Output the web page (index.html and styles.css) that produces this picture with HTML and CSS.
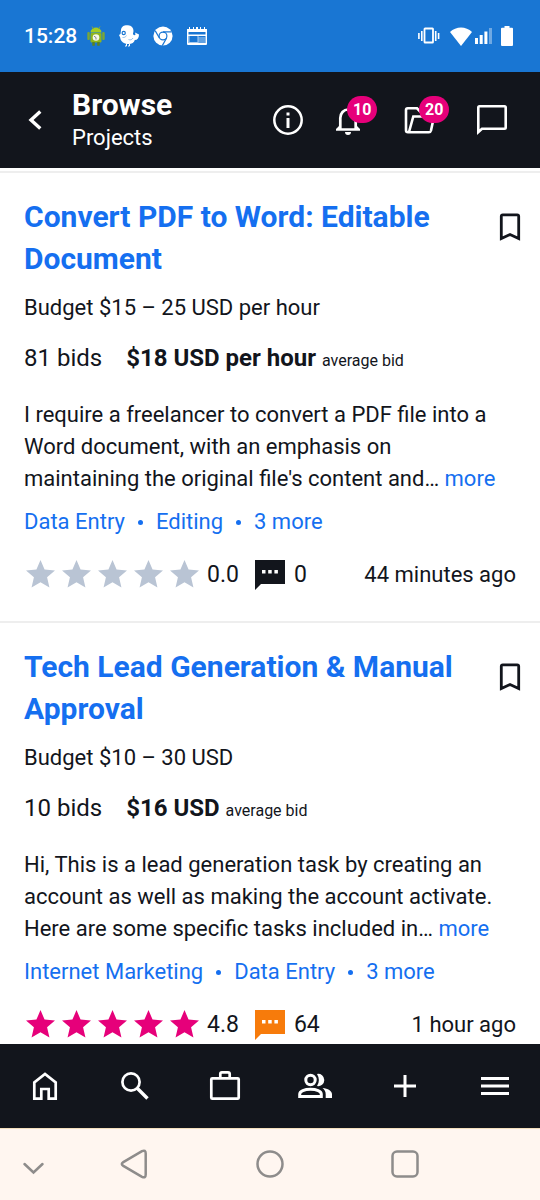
FILE: index.html
```html
<!DOCTYPE html>
<html lang="en">
<head>
<meta charset="utf-8">
<meta name="viewport" content="width=device-width, initial-scale=1">
<title>Browse Projects</title>
<link rel="stylesheet" href="styles.css">
</head>
<body>
<svg class="defs" aria-hidden="true">
  <symbol id="star" viewBox="0.600 0.600 22.800 22.800"><path d="M12 17.270L18.180 21l-1.640-7.030L22 9.240l-7.190-.61L12 2 9.190 8.630 2 9.240l5.460 4.730L5.820 21z"/></symbol>
  <symbol id="chat" viewBox="0 0 30 30"><path d="M0 0h30v24H6l-6 6z"/><path class="dots" d="M7 10h3.500v3.500H7zM13.200 10h3.500v3.500h-3.500zM19.400 10h3.500v3.500h-3.500z"/></symbol>
  <symbol id="bookmark" viewBox="0 0 24 30"><path d="M3.300 26.500V4.300a1.500 1.500 0 0 1 1.500-1.500h14.400a1.500 1.500 0 0 1 1.500 1.500v22.200L12 22.500z" fill="none" stroke="currentColor" stroke-width="2.800"/></symbol>
</svg>

<div class="status">
  <div class="status-group">
    <time class="clock">15:28</time>
    <svg class="s-android" viewBox="0 0 18 20"><path d="M3.500 6.500a5.500 5 0 0 1 11 0z" fill="#a5cc22"/><path d="M5 .5l1.500 2.500M13 .5l-1.500 2.500" stroke="#87a838"/><rect x="3.500" y="7" width="11" height="9.500" rx="1" fill="#8fb51d"/><rect x=".3" y="6" width="2.500" height="8" rx="1" fill="#7aa637"/><rect x="15.200" y="6" width="2.500" height="8" rx="1" fill="#7aa637"/><path d="M5.300 16h2.500v3.700H5.300zM10.200 16h2.500v3.700h-2.500z" fill="#5c8220"/><circle cx="9" cy="11.500" r="3.300" fill="#f5f8e8"/><path d="M9 11.500L7 10.200M9 11.500v2" stroke="#667" stroke-width=".8"/></svg>
    <svg class="s-bird" viewBox="0 0 20 22"><path d="M2 5C2.500 1 6-.2 9 .3c4.500.5 6.500 4 5 8.200-.3 1.500 2 2.500 2.500 1L16 7.500l4 2c0 3.500-1.500 5.500-4.200 5.500-.7 2.600-3 4.100-6.500 4C5 19 1.500 16.500 1.200 12.500L0 10l1.500-1z" fill="#fff"/><circle cx="4.700" cy="8" r="1.600" fill="none" stroke="#1976d3" stroke-width="1.200"/><path d="M7.500 10.500c-1 1.800-2 2-4 2M9.500 14.500c2 1 3.500 0 4.500-1.500" fill="none" stroke="#6fa9e3" stroke-width=".7"/><path d="M7.500 19v2H6M10.500 19v2H9" fill="none" stroke="#fff"/></svg>
    <svg class="s-chrome" viewBox="0 0 20 20"><circle cx="10" cy="10" r="9.600" fill="#fff"/><circle cx="10" cy="10" r="3.900" fill="none" stroke="#1976d3" stroke-width="1.200"/><path d="M10 5.900h8.600M6.400 12L2.300 4.900M13.600 12l-4.300 7.600" stroke="#1976d3" stroke-width="1.200"/></svg>
    <svg class="s-news" viewBox="0 0 20 18"><path d="M0 2h2V0h1v2h3V0h1v2h2V0h2v2h2V0h1v2h3V0h1v2h2v15a1 1 0 0 1-1 1H1a1 1 0 0 1-1-1z" fill="#fff"/><path d="M1.500 5h17v2.500h-17zM1.500 9h17v7h-17z" fill="#1976d3"/><path d="M10.500 9h1v7h-1zM11.500 10.500h7v1h-7zM11.500 12.500h7v1h-7zM11.500 14.500h7v1h-7zM1.500 9h1v7h-1zM2.500 15h8v1h-8z" fill="#a9ccf0"/></svg>
  </div>
  <div class="status-group status-right">
    <svg class="s-vib" viewBox="0 0 22 18"><rect x="6.500" y="1.500" width="8.500" height="14" rx=".6" fill="none" stroke="#fff" stroke-width="1.800"/><path d="M3.800 4v10M17.700 4v10M.9 6v6M20.600 6v6" stroke="#fff" stroke-width="1.600"/></svg>
    <svg class="s-wifi" viewBox="0 0 22 19"><path d="M0 5C6-1 16-1 22 5L11 19z" fill="#fff"/></svg>
    <svg class="s-signal" viewBox="0 0 17 16"><path d="M0 10h3v6H0zM4.700 7h3v9h-3zM9.400 3.500h3V16h-3z" fill="#fff"/><path d="M14 0h3v16h-3z" fill="#6fa9e3"/></svg>
    <svg class="s-batt" viewBox="0 0 12 20"><path d="M3.500 0h5v1.700H11a1 1 0 0 1 1 1V19a1 1 0 0 1-1 1H1a1 1 0 0 1-1-1V2.700a1 1 0 0 1 1-1h2.500z" fill="#fff"/></svg>
  </div>
</div>

<header class="appbar">
  <button class="icon-btn back" aria-label="Back"><svg viewBox="0 0 36 36"><path d="M22.300 9.500L13 18l9.300 8.500" fill="none" stroke="#fff" stroke-width="3.400"/></svg></button>
  <div class="heading"><h1>Browse</h1><p>Projects</p></div>
  <nav class="actions" aria-label="Account">
    <button class="icon-btn info" aria-label="Information"><svg viewBox="0 0 36 36"><circle cx="18" cy="18" r="13.700" fill="none" stroke="#fff" stroke-width="2.500"/><path d="M16.500 10.500h3v3h-3zM16.500 16h3v10h-3z" fill="#fff"/></svg></button>
    <button class="icon-btn" aria-label="Notifications"><svg viewBox="0 0 36 36"><path d="M10.300 27V16a7.700 8.500 0 0 1 15.400 0v11" fill="none" stroke="#fff" stroke-width="2.700"/><path d="M9 24l-3 3v1.700h24V27l-3-3v2.300H9zM15 30h6a3 3 0 0 1-6 0z" fill="#fff"/></svg><span class="badge">10</span></button>
    <button class="icon-btn" aria-label="Projects"><svg viewBox="0 0 36 36"><path d="M7 30L11.300 14.500H32L29 28.500Q28.500 30.300 27 30.300H6Q4 30.300 4 28.300V8Q4 6.300 5.700 6.300H15L18 9.500h8.500Q28 9.500 28 11v3.500" fill="none" stroke="#fff" stroke-width="2.600"/></svg><span class="badge">20</span></button>
    <button class="icon-btn" aria-label="Messages"><svg viewBox="0 0 36 36"><path d="M4.300 30V5.500Q4.300 4.300 5.500 4.300h25q1.200 0 1.200 1.200v20q0 1.200-1.200 1.200H8z" fill="none" stroke="#fff" stroke-width="2.600"/></svg></button>
  </nav>
</header>

<main class="list">
  <article class="card">
    <div class="card-head"><h2><a href="#">Convert PDF to Word: Editable Document</a></h2><button class="bookmark" aria-label="Bookmark"><svg><use href="#bookmark"/></svg></button></div>
    <p class="budget">Budget $15 – 25 USD per hour</p>
    <p class="bids"><span>81 bids</span><span><strong>$18 USD per hour</strong> <small>average bid</small></span></p>
    <p class="desc">I require a freelancer to convert a PDF file into a Word document, with an emphasis on maintaining the original file's content and… <a href="#">more</a></p>
    <div class="tags"><a href="#">Data Entry</a><i></i><a href="#">Editing</a><i></i><a href="#">3 more</a></div>
    <div class="meta"><span class="stars none"><svg><use href="#star"/></svg><svg><use href="#star"/></svg><svg><use href="#star"/></svg><svg><use href="#star"/></svg><svg><use href="#star"/></svg></span><span class="score">0.0</span><svg class="chat"><use href="#chat"/></svg><span>0</span><time class="age">44 minutes ago</time></div>
  </article>
  <article class="card">
    <div class="card-head"><h2><a href="#">Tech Lead Generation &amp; Manual Approval</a></h2><button class="bookmark" aria-label="Bookmark"><svg><use href="#bookmark"/></svg></button></div>
    <p class="budget">Budget $10 – 30 USD</p>
    <p class="bids"><span>10 bids</span><span><strong>$16 USD</strong> <small>average bid</small></span></p>
    <p class="desc">Hi, This is a lead generation task by creating an account as well as making the account activate. Here are some specific tasks included in… <a href="#">more</a></p>
    <div class="tags"><a href="#">Internet Marketing</a><i></i><a href="#">Data Entry</a><i></i><a href="#">3 more</a></div>
    <div class="meta"><span class="stars"><svg><use href="#star"/></svg><svg><use href="#star"/></svg><svg><use href="#star"/></svg><svg><use href="#star"/></svg><svg><use href="#star"/></svg></span><span class="score">4.8</span><svg class="chat orange"><use href="#chat"/></svg><span>64</span><time class="age">1 hour ago</time></div>
  </article>
</main>

<nav class="tabs" aria-label="Main">
  <button class="icon-btn" aria-label="Home"><svg viewBox="0 0 36 36"><path d="M7.300 30.700V14.500L18 6l10.700 8.500v16.200h-7V21h-7.400v9.700z" fill="none" stroke="#fff" stroke-width="2.700"/></svg></button>
  <button class="icon-btn" aria-label="Search"><svg viewBox="0 0 36 36"><circle cx="14" cy="14" r="8.600" fill="none" stroke="#fff" stroke-width="2.700"/><path d="M20 20l10.500 10.500" stroke="#fff" stroke-width="3.300"/></svg></button>
  <button class="icon-btn" aria-label="Work"><svg viewBox="0 0 36 36"><rect x="4.300" y="10.300" width="27.400" height="20.400" rx="1" fill="none" stroke="#fff" stroke-width="2.700"/><path d="M13.300 10V6q0-1.700 1.700-1.700h6q1.700 0 1.700 1.700v4" fill="none" stroke="#fff" stroke-width="2.700"/></svg></button>
  <button class="icon-btn" aria-label="People"><svg viewBox="0 0 36 36"><circle cx="13.500" cy="12" r="4.700" fill="none" stroke="#fff" stroke-width="3"/><path d="M2.700 28.500v-2.300c0-3 4.800-4.900 10.800-4.900s10.800 1.900 10.800 4.900v2.300z" fill="none" stroke="#fff" stroke-width="3"/><path d="M20 5.900a6.200 6.200 0 1 1 0 12.200q3.800-6.100 0-12.200zM25.500 20c5.500.7 9.500 2.800 9.500 6.200V30h-6.300v-3.800c0-2.600-1.200-4.600-3.200-6.200z" fill="#fff"/></svg></button>
  <button class="icon-btn" aria-label="Post"><svg viewBox="0 0 36 36"><path d="M18 7v22M7 18h22" stroke="#fff" stroke-width="3"/></svg></button>
  <button class="icon-btn" aria-label="Menu"><svg viewBox="0 0 36 36"><path d="M4 10.500h28M4 18h28M4 25.500h28" stroke="#fff" stroke-width="3"/></svg></button>
</nav>

<nav class="system" aria-label="System">
  <button class="icon-btn" aria-label="Hide"><svg viewBox="0 0 36 36"><path d="M8.500 18l9 8.500 9-8.500"/></svg></button>
  <button class="icon-btn" aria-label="System back"><svg viewBox="0 0 36 36"><path d="M6.300 16.100L25 5.200Q28.700 3.500 28.700 7.500v21q0 4-3.700 2.300L6.300 19.900Q3.300 18 6.300 16.100z"/></svg></button>
  <button class="icon-btn" aria-label="System home"><svg viewBox="0 0 36 36"><circle cx="18" cy="18" r="12.500"/></svg></button>
  <button class="icon-btn" aria-label="Recent apps"><svg viewBox="0 0 36 36"><rect x="5.500" y="5.500" width="25" height="25" rx="4.500"/></svg></button>
</nav>
</body>
</html>
```
FILE: styles.css
```css
* { box-sizing: border-box; margin: 0; padding: 0; }
body {
  height: 100vh;
  display: flex;
  flex-direction: column;
  font: 22px/32px Roboto, "Liberation Sans", sans-serif;
  color: #12151c;
  background: #fff;
}
a { color: #156ff0; text-decoration: none; }
button { border: 0; background: none; font: inherit; color: inherit; cursor: pointer; }
svg { display: block; flex: none; }
.defs { display: none; }

.status {
  display: flex;
  justify-content: space-between;
  padding: 20px 27px 20px 24px;
  background: #1976d3;
  color: #fff;
}
.status-group { display: flex; align-items: center; gap: 14px; }
.clock { font-size: 21px; font-weight: 500; margin-right: -4px; }
.s-android { width: 18px; height: 20px; }
.s-bird { width: 20px; height: 22px; }
.s-chrome { width: 20px; height: 20px; }
.s-news { width: 20px; height: 18px; }
.status-right { gap: 3px; }
.s-vib { width: 22px; height: 18px; margin-right: 7px; }
.s-wifi { width: 22px; height: 19px; }
.s-signal { width: 17px; height: 16px; margin-right: 6px; }
.s-batt { width: 12px; height: 20px; }

.icon-btn { position: relative; width: 36px; height: 36px; flex: none; }
.icon-btn svg { width: 36px; height: 36px; }

.appbar {
  display: flex;
  align-items: center;
  padding: 15px 30px 15px 18px;
  background: #12151c;
  color: #fff;
}
.heading { flex: 1; padding-left: 18px; }
h1 { font-size: 30px; line-height: 36px; font-weight: 700; }
.heading p { font-size: 22px; line-height: 30px; }
.actions { display: flex; gap: 36px; }
.info { margin-right: -12px; }
.badge {
  position: absolute;
  left: 17px;
  top: -6px;
  min-width: 30px;
  padding: 0 6px;
  border-radius: 14px;
  background: #e6007a;
  font-size: 16px;
  line-height: 27px;
  font-weight: 700;
  text-align: center;
}

.list { flex: 1; min-height: 0; overflow: auto; scrollbar-width: none; padding-top: 3px; }
.card { border-top: 2px solid #eee; padding: 23px 24px 30px; }
.card-head { display: flex; justify-content: space-between; align-items: flex-start; }
h2 { font-size: 30px; line-height: 42px; font-weight: 700; max-width: 440px; }
.bookmark { margin: 16px -6px 0 0; }
.bookmark svg { width: 24px; height: 30px; }
.budget { margin-top: 12px; }
.bids { display: flex; gap: 24px; margin-top: 18px; font-size: 24px; }
.bids small { font-size: 16px; line-height: 16px; }
.desc { margin-top: 25px; padding-right: 10px; }
.tags { display: flex; align-items: center; gap: 13px; margin-top: 11px; }
.tags i { width: 5px; height: 5px; border-radius: 50%; background: #156ff0; }
.meta { display: flex; align-items: center; margin-top: 20px; font-size: 23px; }
.stars { display: flex; gap: 3px; fill: #e6007a; }
.stars svg { width: 33px; height: 33px; }
.stars.none { fill: #b9c4d4; }
.score { margin-left: 6px; }
.chat { width: 30px; height: 30px; margin: 0 9px 0 16px; fill: #12151c; }
.chat.orange { fill: #f77b0b; }
.dots { fill: #fff; }
.age { margin-left: auto; font-size: 22px; }

.tabs {
  display: grid;
  grid-template-columns: repeat(6, 1fr);
  justify-items: center;
  padding: 24px 0;
  background: #12151c;
}
.system {
  display: grid;
  grid-template-columns: 1fr 2fr 2fr 2fr 1fr;
  justify-items: center;
  padding: 17px 0 18px;
  border-top: 1px solid #f3dfbd;
  background: #fff6f0;
}
.system svg { fill: none; stroke: #8e8c8b; stroke-width: 2.500px; stroke-linecap: round; }
```
